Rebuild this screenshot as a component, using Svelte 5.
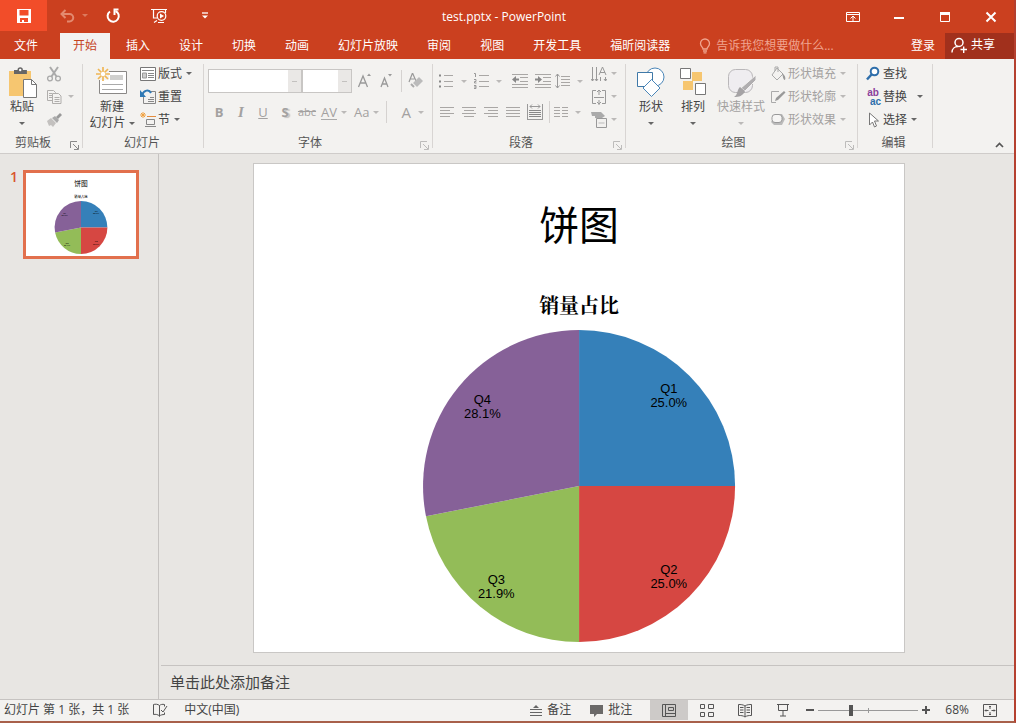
<script>
  const tabs = ['插入', '设计', '切换', '动画', '幻灯片放映', '审阅', '视图', '开发工具', '福昕阅读器'];
  let zoom = $state(32);

  const slices = [
    { name: 'Q1', pct: '25.0%', x: 416, y: 229, color: '#3580b9', d: 'M326 322V165.500A156.500 156.500 0 0 1 482.500 322Z' },
    { name: 'Q2', pct: '25.0%', x: 416, y: 410, color: '#d64742', d: 'M326 322H482.500A156.500 156.500 0 0 1 326 478.500Z' },
    { name: 'Q3', pct: '21.9%', x: 243, y: 420, color: '#93bc58', d: 'M326 322V478.500A156.500 156.500 0 0 1 172.500 352.300Z' },
    { name: 'Q4', pct: '28.1%', x: 229, y: 240, color: '#866198', d: 'M326 322L172.500 352.300A156.500 156.500 0 0 1 326 165.500Z' }
  ];

  const g = '#a9a7a5';
  const lines = (rows, color = g) =>
    rows.map(([x1, x2, y]) => `<path d="M${x1} ${y}.5H${x2}" stroke="${color}"/>`).join('');

  const icons = {
    save: '<path fill="#fff" fill-rule="evenodd" d="M1 1h14v14H1zM3.500 2v5.500h9V2zM4 10v4h2v-2h2v2h4v-4z"/>',
    undo: '<path d="M3 6h7.500a3.500 3.500 0 0 1 0 7.500H8M6.500 2L2.500 6l4 4" fill="none" stroke="#e38a70" stroke-width="2"/>',
    redo: '<path d="M5 3.500A5.600 5.600 0 1 0 10.500 3" fill="none" stroke="#fff" stroke-width="2"/><path d="M8.500 1.500h5M9.500 1v6" stroke="#fff" stroke-width="2" fill="none"/>',
    show: '<path d="M0 1.500h16M2.500 2v8H6M3 14.500l3-2M7 14.500h6M14.500 2v3" stroke="#fff" stroke-width="1.200" fill="none"/><circle cx="10.500" cy="8" r="4.300" fill="none" stroke="#fff" stroke-width="1.200"/><path d="M9 5.500l4 2.500-4 2.500z" fill="#fff"/>',
    more: '<path d="M5 5h6" stroke="#fff" stroke-width="1.300"/><path d="M5 7.500h6l-3 3z" fill="#fff"/>',
    ribbon: '<path d="M1.500 3.500h13v9h-13zM1.500 5.500h13M8 12V7M5.500 9.500L8 7l2.500 2.500" stroke="#fff" fill="none"/>',
    min: '<path d="M3 9h10" stroke="#fff" stroke-width="2"/>',
    max: '<path d="M3.500 3.500h9v9h-9z" stroke="#fff" fill="none"/><path d="M3 4.500h10" stroke="#fff" stroke-width="3"/>',
    close: '<path d="M3.500 3.500l9 9M12.500 3.500l-9 9" stroke="#fff" stroke-width="2"/>',
    bulb: '<path d="M6 11c0-2-2.500-2.500-2.500-5.500a4.500 4.500 0 0 1 9 0C12.500 8.500 10 9 10 11zM6 13h4M6.500 14.800h3" stroke="#f0a48f" stroke-width="1.300" fill="none"/>',
    share: '<circle cx="8" cy="5.500" r="4" stroke="#fff" stroke-width="1.500" fill="none"/><path d="M1 15.500c0-4 3-6 6-6M9.500 12.500h6.500M12.700 9.500v6.500" stroke="#fff" stroke-width="1.400" fill="none"/>',
    paste: '<path d="M3 4h22v25H3z" fill="#f6c670"/><path d="M8 3h3.500a2.700 2.700 0 0 1 5.400 0h4v4H8z" fill="#666"/><circle cx="14.200" cy="3" r="1.200" fill="#fff"/><path d="M17.500 12.500h8l5 5v13h-13z" fill="#fff" stroke="#777"/><path d="M25.500 12.500v5h5" fill="none" stroke="#777"/>',
    cut: '<path d="M4 1l6.500 9.500M12 1L5.500 10.500" stroke="#aaa" stroke-width="2"/><circle cx="4" cy="12.500" r="2.400" fill="none" stroke="#aaa" stroke-width="1.300"/><circle cx="12" cy="12.500" r="2.400" fill="none" stroke="#aaa" stroke-width="1.300"/>',
    copy: '<path d="M6.500 11.500h-5v-10h6l2 2v1M6.500 4.500h6l2.500 2.500v7.500H6.500zM3 4.500h3M3 6.500h3M3 8.500h3M8.500 8.500h5M8.500 10.500h5M8.500 12.500h5" fill="none" stroke="#b0aeac"/>',
    brush: '<path d="M1 9l4-3 5 5-3 4-2-2-2 1z" fill="#c3c1bf"/><path d="M6 6l3-2 4 4-2 3z" fill="#aaa"/><path d="M10 5l4-4 2 2-4 4z" fill="#999"/>',
    newslide: '<path d="M3.500 4.500h27v22h-27z" fill="#fff" stroke="#8a8886"/><path d="M14 8h13v5H14z" fill="#d0d0ce"/><path d="M6 17.500h21M6 22.500h21" stroke="#aaa"/><path d="M0 0h13v13H0z" fill="#f3f2f0"/><path d="M7 0v14M0 7h14M2 2l10 10M12 2L2 12" stroke="#f0b755" stroke-width="1.700"/><circle cx="7" cy="7" r="2.200" fill="#fff"/>',
    layout: '<path d="M.5 1.500h15v13H.5z" fill="#fff" stroke="#777"/><path d="M2 4.500h12M8 7.500h6M8 9.500h6M8 11.500h6" stroke="#888"/><path d="M2.500 7h4v5h-4z" fill="#ccc" stroke="#999"/>',
    reset: '<path d="M3.500 5.500v9h12v-12H11M10 8.500h4M8 10.500h6M8 12.500h6" fill="none" stroke="#888"/><path d="M2 6c2-5 7-6 9-2" fill="none" stroke="#2f79b5" stroke-width="2"/><path d="M0 1v7h6z" fill="#2f79b5"/>',
    section: '<path d="M6.500 7.500h8v5h-8zM5 14.500h11" fill="none" stroke="#888"/><path d="M7 4.500h9" stroke="#e58c3c"/><path d="M3 0v6M0 3h6M1 1l4 4M5 1L1 5" stroke="#f0a03f"/>',
    grow: '<path d="M1.500 14L6 3l4.500 11M3 10h6" fill="none" stroke="#999" stroke-width="1.300"/><path d="M10 3l2-2.500L14 3z" fill="#999"/>',
    shrink: '<path d="M2 14l3.500-9L9 14M3.200 11h4.600" fill="none" stroke="#999" stroke-width="1.300"/><path d="M9 1h4l-2 2.500z" fill="#999"/>',
    eraser: '<path d="M1 9L4.500 0 8 8M2.300 6h4" fill="none" stroke="#999" stroke-width="1.200"/><path d="M5 10l6-6 4 4-6 6z" fill="#bbb"/><path d="M3 11l3 3" stroke="#aaa" stroke-width="2"/>',
    bullets: lines([[5, 14, 2], [5, 14, 8], [5, 14, 13]]) + '<path d="M0 2.500h2M0 8.500h2M0 13.500h2" stroke="#888" stroke-width="2"/>',
    numbers: lines([[5, 15, 2], [5, 15, 8], [5, 15, 13]]) + '<path d="M0 .5h1.500V4M0 6.500h2v2H.5V10h2M0 12.500h2v3H0M0 14h2" fill="none" stroke="#999"/>',
    dedent: lines([[0, 16, 1], [8, 16, 4], [8, 16, 8], [0, 16, 11], [0, 16, 14]]) + '<path d="M0 6.500L4 3v2.500h3v2H4V10z" fill="#888"/>',
    indent: lines([[0, 16, 1], [8, 16, 4], [8, 16, 8], [0, 16, 11], [0, 16, 14]]) + '<path d="M7 6.500L3 3v2.500H0v2h3V10z" fill="#888"/>',
    spacing: lines([[6, 15, 3], [6, 15, 6], [6, 15, 9], [6, 15, 12]]) + '<path d="M2.500 1v14M.5 3.500l2-2.500 2 2.500M.5 12.500l2 2.500 2-2.500" fill="none" stroke="#999"/>',
    left: lines([[1, 15, 3], [1, 11, 6], [1, 15, 9], [1, 11, 12]]),
    center: lines([[1, 15, 3], [3, 13, 6], [1, 15, 9], [3, 13, 12]]),
    right: lines([[1, 15, 3], [5, 15, 6], [1, 15, 9], [5, 15, 12]]),
    justify: lines([[1, 15, 3], [1, 15, 6], [1, 15, 9], [1, 15, 12]]),
    distribute: lines([[2, 14, 6], [2, 14, 8], [2, 14, 10], [2, 14, 12]], '#888') + '<path d="M.5 0v16M15.500 0v16M3 2.500h10M5 .500L3 2.500l2 2M11 .500l2 2-2 2M1 15.500h14" fill="none" stroke="#999"/>',
    columns: lines([[1, 7, 3], [9, 15, 3], [1, 7, 6], [9, 15, 6], [1, 7, 9], [9, 15, 9], [1, 7, 12], [9, 15, 12]]),
    direction: '<path d="M1.500 1v14M5.500 1v14M9.500 11v4M14.500 11v4M0 13l1.500 2L3 13M4 13l1.500 2L7 13M13 13l1.500 2 1.500-2M8 9l3.500-8L15 9M9 6.500h5" fill="none" stroke="#999"/>',
    alignv: '<path d="M5 1.500H1.500v13H5M11 1.500h3.500v13H11M3 8.500h10M8 1v5M8 11v5M6 3l2-2 2 2M6 13l2 2 2-2" fill="none" stroke="#999"/>',
    smart: '<path d="M0 0h10l4 4-3 2H4V4H1z" fill="#aaa"/><path d="M5.500 6.500h10v9h-10z" fill="#f2f1ef" stroke="#999"/><path d="M7.500 11h6" stroke="#bbb"/>',
    shapes: '<circle cx="19" cy="10" r="9" fill="#fff" stroke="#4a86b8"/><path d="M1.500 5.500h15v14h-15z" fill="#fff" stroke="#3f79a8"/><path d="M15.500 12.500l8.500 8.500-8.500 8.500L7 21z" fill="#fff" stroke="#4a86b8"/>',
    arrange: '<path d="M13 5h10v9h-9v9H4v-9h9z" fill="#f6c670"/><path d="M1.500 1.500h10v10h-10zM16.500 16.500h10v11h-10z" fill="#fff" stroke="#777"/>',
    styles: '<rect x="2.500" y="2.500" width="24" height="23" rx="7" fill="#efedf0" stroke="#b9b7b9"/><path d="M30 8v5L19 24l-4-3z" fill="#b0aeb0" stroke="#f3f2f0"/><path d="M14 20l5 4c-2 5-6 6-11 6 4-2 3-8 6-10z" fill="#a5a3a5"/>',
    fill: '<path d="M7 2l6 6-6 6-5-5zM5 5V1h3v5" fill="none" stroke="#aaa"/><path d="M12 7c3 2 4 5 3 7-2 0-2-4-3-7z" fill="#999"/>',
    outline: '<path d="M9 2.500H1.500v11H6" fill="none" stroke="#aaa"/><path d="M5 12l1-3 8-7 1.500 1.500L8 11z" fill="#999"/>',
    effects: '<path d="M6 2h6l3 5-3 6H4L1 10z" fill="#bbb"/><rect x="2" y="2.500" width="10" height="8" rx="3" fill="#f6f5f4" stroke="#999"/>',
    find: '<circle cx="9.500" cy="5.500" r="3.800" fill="#fff" stroke="#2f6fab" stroke-width="2"/><path d="M6.500 8.500L2 13.500" stroke="#2f6fab" stroke-width="2.500"/>',
    select: '<path d="M4.500 1v12l3-3 2 5 2-1-2-5h4z" fill="#fff" stroke="#777"/>',
    launch: '<path d="M.5 7V.500H7M3 3l5 5M8.500 4v4.500H4" fill="none" stroke="#888"/>',
    collapse: '<path d="M2 8l3.500-3.500L9 8" fill="none" stroke="#555" stroke-width="1.700"/>',
    spell: '<path d="M7.500 3.500C6 2 3 2 1.500 2.500v10c2-.5 4.500 0 6 1.500M7.500 3.500v11M7.500 3.500c1-1 3-1.500 5-1v2M7.500 14c1-1 3-1.500 5-1.500v-2M9 8l2 2 4-6" fill="none" stroke="#555"/>',
    notes: '<path d="M2 7.500h12M2 10.500h12M2 13.500h12" stroke="#666"/><path d="M5 6l3-3 3 3z" fill="#666"/>',
    comment: '<path d="M1 3h13v9H8l-3 3v-3H1z" fill="#6b6a69"/>',
    normal: '<path d="M1.500 2.500h13v12h-13zM4.500 3v11M5 11.500h9M7.500 5.500h5v3h-5z" fill="none" stroke="#555"/>',
    sorter: '<path d="M1.500 2.500h4v4h-4zM9.500 2.500h5v4h-5zM1.500 10.500h4v4h-4zM9.500 10.500h5v4h-5z" fill="none" stroke="#555"/>',
    reading: '<path d="M8 4C6 2.500 3.500 2.500 1.500 2.500v11C4 13.500 6 13.500 8 15c2-1.500 4-1.500 6.500-1.500v-11C12.500 2.500 10 2.500 8 4zM8 4v11M3 5.500h3.500M3 8h3.500M3 10.500h3.500M9.500 5.500H13M9.500 8H13M9.500 10.500H13" fill="none" stroke="#555"/>',
    present: '<path d="M2 2.500h12M3.500 3v5.500h9V3M8 9v5M5 14h6" fill="none" stroke="#555"/>',
    fit: '<path d="M1.500 2.500h13v12h-13zM8 4v3M8 10v3M3 8.500h3.500M9.500 8.500H13M7 5l1-1 1 1M7 12l1 1 1-1M4 7.500l-1 1 1 1M12 7.500l1 1-1 1" fill="none" stroke="#555"/>'
  };
  const bars = [
    ['left', '左对齐'],
    ['center', '居中'],
    ['right', '右对齐'],
    ['justify', '两端对齐'],
    ['distribute', '分散对齐']
  ];
  const shapeTools = [
    ['fill', '形状填充'],
    ['outline', '形状轮廓'],
    ['effects', '形状效果']
  ];
</script>

{#snippet icon(name, w = 16, h = 16)}
  <svg width={w} height={h} viewBox="0 0 {w} {h}" aria-hidden="true">{@html icons[name]}</svg>
{/snippet}

{#snippet slide()}
  <svg class="slide-art" viewBox="0 -1 652 490" role="img" aria-label="饼图">
    <text class="s-title" x="326" y="75">饼图</text>
    <text class="s-sub" x="326" y="148">销量占比</text>
    {#each slices as s}
      <path d={s.d} fill={s.color} />
    {/each}
    {#each slices as s}
      <text class="s-label" x={s.x} y={s.y}>{s.name}</text>
      <text class="s-label" x={s.x} y={s.y + 14}>{s.pct}</text>
    {/each}
  </svg>
{/snippet}

<div class="window">
  <header class="titlebar">
    <div class="quick">
      <button class="save" aria-label="保存">{@render icon('save')}</button>
      <button class="undo" aria-label="撤消">{@render icon('undo')}<i class="caret"></i></button>
      <button class="redo" aria-label="重复">{@render icon('redo')}</button>
      <button class="redo" aria-label="从头开始">{@render icon('show')}</button>
      <button class="redo" aria-label="自定义">{@render icon('more')}</button>
    </div>
    <h1>test.pptx - PowerPoint</h1>
    <div class="controls">
      <button aria-label="功能区显示选项">{@render icon('ribbon')}</button>
      <button aria-label="最小化">{@render icon('min')}</button>
      <button aria-label="最大化">{@render icon('max')}</button>
      <button aria-label="关闭">{@render icon('close')}</button>
    </div>
  </header>

  <nav class="tabs">
    <button class="file">文件</button>
    <button class="active">开始</button>
    {#each tabs as t}<button>{t}</button>{/each}
    <button class="tell">{@render icon('bulb')}告诉我您想要做什么...</button>
    <span class="grow"></span>
    <button class="login">登录</button>
    <button class="share">{@render icon('share', 17, 17)}共享</button>
  </nav>

  <div class="ribbon">
    <section class="clip">
      <div class="body">
        <button class="big">{@render icon('paste', 32, 32)}<span>粘贴</span><span><i class="caret"></i></span></button>
        <div class="stack off">
          <button aria-label="剪切">{@render icon('cut')}</button>
          <button aria-label="复制">{@render icon('copy')}<i class="caret"></i></button>
          <button aria-label="格式刷">{@render icon('brush')}</button>
        </div>
      </div>
      <footer><span>剪贴板</span><button aria-label="剪贴板选项">{@render icon('launch', 9, 9)}</button></footer>
    </section>

    <section class="slides">
      <div class="body">
        <button class="big">{@render icon('newslide', 32, 32)}<span>新建</span><span>幻灯片 <i class="caret"></i></span></button>
        <div class="stack">
          <button>{@render icon('layout')}版式<i class="caret"></i></button>
          <button>{@render icon('reset')}重置</button>
          <button>{@render icon('section')}节<i class="caret"></i></button>
        </div>
      </div>
      <footer><span>幻灯片</span></footer>
    </section>

    <section class="font off">
      <div class="body rows">
        <div class="row">
          <select class="family" aria-label="字体"><option></option></select>
          <select class="size" aria-label="字号"><option></option></select>
          <button class="sq" aria-label="增大字号">{@render icon('grow')}</button>
          <button class="sq" aria-label="减小字号">{@render icon('shrink')}</button>
          <i class="rule"></i>
          <button class="sq" aria-label="清除格式">{@render icon('eraser')}</button>
        </div>
        <div class="row letters">
          <button class="sq"><b>B</b></button>
          <button class="sq serif"><em>I</em></button>
          <button class="sq"><u>U</u></button>
          <button class="sq shadow"><b>S</b></button>
          <button class="sq"><s>abc</s></button>
          <button class="wide"><span class="av">AV</span><i class="caret"></i></button>
          <button class="wide">Aa<i class="caret"></i></button>
          <i class="rule"></i>
          <button class="wide large">A<i class="caret"></i></button>
        </div>
      </div>
      <footer><span>字体</span><button aria-label="字体选项">{@render icon('launch', 9, 9)}</button></footer>
    </section>

    <section class="para off">
      <div class="body">
        <div class="rows">
          <div class="row spread">
            <button class="drop" aria-label="项目符号">{@render icon('bullets')}<i class="caret"></i></button>
            <button class="drop" aria-label="编号">{@render icon('numbers')}<i class="caret"></i></button>
            <button class="sq" aria-label="减少缩进">{@render icon('dedent')}</button>
            <button class="sq" aria-label="增加缩进">{@render icon('indent')}</button>
            <button class="drop" aria-label="行距">{@render icon('spacing')}<i class="caret"></i></button>
          </div>
          <div class="row aligns">
            {#each bars as [name, label]}
              <button class="sq" aria-label={label}>{@render icon(name)}</button>
            {/each}
            <i class="rule"></i>
            <button class="drop" aria-label="分栏">{@render icon('columns')}<i class="caret"></i></button>
          </div>
        </div>
        <div class="stack">
          <button aria-label="文字方向">{@render icon('direction')}<i class="caret"></i></button>
          <button aria-label="对齐文本">{@render icon('alignv')}<i class="caret"></i></button>
          <button aria-label="转换为图形">{@render icon('smart')}<i class="caret"></i></button>
        </div>
      </div>
      <footer><span>段落</span><button aria-label="段落选项">{@render icon('launch', 9, 9)}</button></footer>
    </section>

    <section class="draw">
      <div class="body">
        <button class="big">{@render icon('shapes', 30, 32)}<span>形状</span><span><i class="caret"></i></span></button>
        <button class="big">{@render icon('arrange', 28, 32)}<span>排列</span><span><i class="caret"></i></span></button>
        <button class="big off styles">{@render icon('styles', 30, 32)}<span>快速样式</span><span><i class="caret"></i></span></button>
        <div class="stack off">
          {#each shapeTools as [name, label]}
            <button>{@render icon(name)}{label}<i class="caret"></i></button>
          {/each}
        </div>
      </div>
      <footer><span>绘图</span><button class="off" aria-label="绘图选项">{@render icon('launch', 9, 9)}</button></footer>
    </section>

    <section class="edit">
      <div class="body">
        <div class="stack">
          <button>{@render icon('find')}查找</button>
          <button><span class="swap"><span>ab</span><span>ac</span></span>替换<i class="caret far"></i></button>
          <button>{@render icon('select')}选择<i class="caret"></i></button>
        </div>
      </div>
      <footer><span>编辑</span></footer>
    </section>
    <button class="collapse" aria-label="折叠功能区">{@render icon('collapse', 11, 12)}</button>
  </div>

  <main>
    <aside>
      <span class="num">1</span>
      <div class="thumb">{@render slide()}</div>
    </aside>
    <div class="editor">
      <div class="canvas"><div class="slide">{@render slide()}</div></div>
      <div class="notes">单击此处添加备注</div>
    </div>
  </main>

  <footer class="status">
    <span class="count">幻灯片 第 1 张，共 1 张</span>
    <button aria-label="拼写检查">{@render icon('spell')}</button>
    <span class="lang">中文(中国)</span>
    <span class="grow"></span>
    <button class="note">{@render icon('notes')}备注</button>
    <button class="note">{@render icon('comment')}批注</button>
    <div class="views">
      <button class="on" aria-label="普通视图">{@render icon('normal')}</button>
      <button aria-label="幻灯片浏览">{@render icon('sorter')}</button>
      <button aria-label="阅读视图">{@render icon('reading')}</button>
      <button aria-label="幻灯片放映">{@render icon('present')}</button>
    </div>
    <button class="sign" aria-label="缩小"><i></i></button>
    <input type="range" min="0" max="100" bind:value={zoom} aria-label="显示比例" />
    <button class="sign plus" aria-label="放大"><i></i></button>
    <span class="pct">68%</span>
    <button aria-label="适应窗口">{@render icon('fit')}</button>
  </footer>
</div>

<style>
  :global(body) {
    margin: 0;
  }
  * {
    box-sizing: border-box;
  }
  .window {
    display: flex;
    flex-direction: column;
    min-height: 100vh;
    border-right: 2px solid #b5402f;
    border-bottom: 2px solid #a8604a;
    background: #e8e6e3;
    color: #444;
    font: 12px/16px 'Open Sans', 'Noto Sans CJK SC', sans-serif;
  }
  button {
    display: flex;
    align-items: center;
    padding: 0;
    border: 0;
    background: none;
    color: inherit;
    font: inherit;
    white-space: nowrap;
  }
  svg {
    display: block;
    flex: none;
  }
  .grow {
    flex: 1;
  }
  .caret {
    display: inline-block;
    flex: none;
    border: 3px solid transparent;
    border-top-color: #666;
    border-bottom: 0;
    vertical-align: middle;
  }
  .off {
    color: #a3a1a0;
  }
  .off .caret {
    border-top-color: #bbb9b8;
  }

  .titlebar {
    display: grid;
    grid-template-columns: 1fr auto 1fr;
    height: 31px;
    background: #cb401f;
    color: #fff;
  }
  .quick,
  .controls {
    display: flex;
  }
  .quick button {
    padding-bottom: 2px;
  }
  .controls {
    justify-content: flex-end;
  }
  .controls button,
  .redo,
  .save {
    justify-content: center;
    width: 46px;
  }
  .save {
    width: 47px;
    background: #f24d29;
  }
  .undo {
    gap: 7px;
    width: 43px;
    padding-left: 12px;
  }
  .undo .caret {
    border-top-color: #dc7a5e;
  }
  h1 {
    margin: 0;
    padding-right: 6px;
    font: inherit;
    line-height: 33px;
  }

  .tabs {
    display: flex;
    align-items: stretch;
    gap: 3px;
    height: 28px;
    padding-top: 2px;
    background: #cb401f;
    color: #fff;
  }
  .tabs button {
    padding: 0 13px 1px;
  }
  .tabs .file {
    margin-right: 5px;
    padding: 0 14px 1px;
  }
  .tabs .active {
    background: #f3f2f1;
    color: #c5431f;
  }
  .tabs .tell {
    padding-left: 11px;
    gap: 3px;
    color: #f0a48f;
  }
  .tabs .login {
    padding: 0 7px 1px;
  }
  .tabs .share {
    gap: 3px;
    width: 69px;
    padding: 0 0 2px 6px;
    background: #a1301c;
  }

  .ribbon {
    display: flex;
    height: 95px;
    border-bottom: 1px solid #cfccca;
    background: #f3f2f0;
  }
  section {
    position: relative;
    display: flex;
    flex: none;
    flex-direction: column;
    padding-top: 3px;
  }
  section::after {
    content: '';
    position: absolute;
    inset: 5px 0 5px auto;
    border-right: 1px solid #d8d5d3;
  }
  .body {
    display: flex;
    height: 69px;
  }
  section footer {
    display: flex;
    align-items: center;
    height: 22px;
    padding: 2px 4px 0 0;
    color: #555;
  }
  section footer span {
    flex: 1;
    padding-right: 4px;
    text-align: center;
  }
  section footer span:only-child {
    padding: 0;
  }
  section footer button {
    align-self: flex-end;
    padding-bottom: 3px;
  }
  section.off footer button,
  footer .off {
    opacity: 0.5;
  }
  .clip {
    width: 83px;
  }
  .slides {
    width: 121px;
    padding-left: 1px;
  }
  .font {
    width: 229px;
  }
  .para {
    width: 193px;
  }
  .draw {
    width: 232px;
  }
  .edit {
    width: 75px;
  }
  .big {
    flex-direction: column;
    padding-top: 5px;
    line-height: 16px;
  }
  .clip .big {
    width: 44px;
  }
  .slides .big {
    width: 56px;
  }
  .draw .body {
    padding-left: 4px;
  }
  .draw .big {
    width: 42px;
  }
  .draw .styles {
    width: 54px;
  }
  .draw .stack {
    padding-left: 2px;
  }
  .stack {
    display: flex;
    flex-direction: column;
  }
  .stack button {
    gap: 2px;
    height: 23px;
  }
  .stack .caret {
    margin-left: 2px;
  }
  .stack .far {
    margin-left: 8px;
  }
  .clip .stack {
    padding-left: 2px;
  }
  .clip .stack button {
    gap: 4px;
  }
  .edit .stack {
    padding-left: 7px;
  }
  .rows {
    display: flex;
    flex-direction: column;
    justify-content: center;
    gap: 7px;
  }
  .row {
    display: flex;
    align-items: center;
    height: 24px;
  }
  .font .row {
    padding-left: 4px;
  }
  .spread {
    justify-content: space-between;
  }
  .aligns {
    margin-left: -3px;
  }
  .sq {
    justify-content: center;
    width: 22px;
    height: 22px;
  }
  .rule {
    height: 22px;
    margin: 0 3px;
    border-left: 1px solid #d5d2d0;
  }
  select {
    height: 24px;
    border: 1px solid #c8c6c4;
    border-radius: 0;
    appearance: none;
    background:
      conic-gradient(from -45deg at 50% 100%, #bbb9b8 90deg, transparent 0) right 3px center / 6px 3px no-repeat,
      linear-gradient(90deg, #fff calc(100% - 13px), #eae8e6 0);
    background:
      linear-gradient(#c3c1bf, #c3c1bf) right 4px center / 5px 1px no-repeat,
      linear-gradient(90deg, #fff calc(100% - 13px), #eae8e6 0);
  }
  .family {
    width: 94px;
  }
  .size {
    width: 50px;
    margin-right: 2px;
  }
  .letters {
    font-size: 13px;
  }
  .serif {
    font-family: 'Liberation Serif', serif;
    font-size: 15px;
    font-weight: bold;
  }
  .shadow {
    text-shadow: 2px 1px 1px #c5c3c1;
  }
  .letters s {
    font-size: 11px;
  }
  .letters .wide {
    gap: 4px;
    padding: 0 4px 0 3px;
  }
  .av {
    border-bottom: 1px solid #aaa;
    line-height: 14px;
  }
  .letters .large {
    gap: 7px;
    padding-left: 11px;
    font-size: 15px;
  }
  .drop {
    gap: 6px;
    width: 34px;
    height: 22px;
  }
  .para .body {
    padding-left: 6px;
    gap: 2px;
  }
  .para .rows {
    width: 150px;
  }
  .para .sq {
    flex: none;
  }
  .swap {
    display: flex;
    flex-direction: column;
    width: 16px;
    color: #8a3f9b;
    font: bold 10px/9px 'Liberation Sans', sans-serif;
  }
  .swap span + span {
    align-self: flex-end;
    color: #2f6fab;
  }
  .collapse {
    align-self: flex-end;
    margin: 0 9px 2px auto;
  }

  main {
    display: flex;
    flex: 1;
  }
  aside {
    display: flex;
    align-items: flex-start;
    flex: none;
    gap: 5px;
    width: 159px;
    padding: 16px 0 0 10px;
    border-right: 1px solid #c6c3c1;
  }
  .num {
    width: 8px;
    color: #d9552f;
    font-size: 14px;
    font-weight: 600;
    line-height: 14px;
  }
  .thumb {
    width: 116px;
    border: 3px solid #e2704d;
    background: #fff;
  }
  .editor {
    display: flex;
    flex: 1;
    flex-direction: column;
    padding-left: 2px;
  }
  .canvas {
    display: flex;
    flex: 1;
    align-items: center;
    justify-content: center;
    padding: 0 17px 3px 0;
  }
  .slide {
    width: 78%;
    border: 1px solid #c9c7c5;
    background: #fff;
  }
  .slide-art {
    width: 100%;
    height: auto;
    text-anchor: middle;
    fill: #000;
  }
  .s-title {
    font: 40px 'Noto Sans CJK SC', sans-serif;
  }
  .s-sub {
    font: bold 20px 'Noto Serif CJK SC', 'Noto Sans CJK SC', serif;
  }
  .s-label {
    font: 13px 'Liberation Sans', sans-serif;
  }
  .notes {
    height: 34px;
    padding-left: 9px;
    border-top: 1px solid #c6c3c1;
    font-size: 15px;
    line-height: 32px;
  }

  .status {
    display: flex;
    align-items: center;
    height: 22px;
    padding: 0 16px 1px 4px;
    border-top: 1px solid #c6c3c1;
    background: #f3f2f0;
  }
  .count {
    margin-right: 23px;
  }
  .lang {
    margin-left: 16px;
  }
  .note {
    gap: 3px;
    margin-right: 18px;
  }
  .views {
    display: flex;
    align-self: stretch;
  }
  .views button {
    justify-content: center;
    width: 38px;
  }
  .views .on {
    background: #cdcac8;
  }
  .sign {
    position: relative;
    justify-content: center;
    width: 16px;
    height: 16px;
  }
  .sign i,
  .plus::after {
    width: 8px;
    height: 2px;
    background: #555;
  }
  .plus::after {
    content: '';
    position: absolute;
    transform: rotate(90deg);
  }
  input {
    width: 100px;
    height: 14px;
    margin: 0;
    appearance: none;
    background:
      linear-gradient(#999, #999) center / 100% 1px no-repeat,
      linear-gradient(#999, #999) center / 1px 5px no-repeat;
  }
  input::-webkit-slider-thumb {
    width: 4px;
    height: 11px;
    appearance: none;
    background: #555;
  }
  .pct {
    margin: 0 13px 0 11px;
  }
</style>
